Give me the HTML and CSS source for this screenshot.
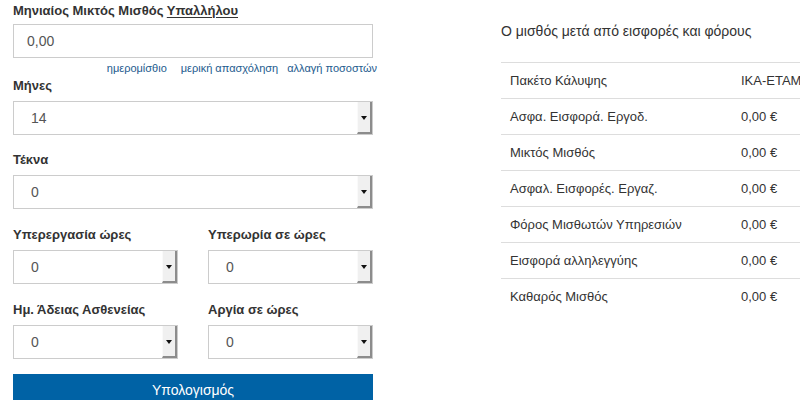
FILE: index.html
```html
<!DOCTYPE html>
<html>
<head>
<meta charset="utf-8">
<link rel="stylesheet" href="styles.css">
</head>
<body>
<div class="page">
  <div class="form">
    <div class="title">Μηνιαίος Μικτός Μισθός <u>Υπαλλήλου</u></div>
    <div class="input">0,00</div>
    <div class="links">
      <a>ημερομίσθιο</a>
      <a>μερική απασχόληση</a>
      <a>αλλαγή ποσοστών</a>
    </div>
    <div class="label">Μήνες</div>
    <div class="select"><span class="val">14</span><span class="btn"><i></i></span></div>
    <div class="label gap">Τέκνα</div>
    <div class="select"><span class="val">0</span><span class="btn"><i></i></span></div>
    <div class="pair">
      <div class="col">
        <div class="label">Υπερεργασία ώρες</div>
        <div class="select"><span class="val">0</span><span class="btn"><i></i></span></div>
      </div>
      <div class="col">
        <div class="label">Υπερωρία σε ώρες</div>
        <div class="select"><span class="val">0</span><span class="btn"><i></i></span></div>
      </div>
    </div>
    <div class="pair">
      <div class="col">
        <div class="label">Ημ. Άδειας Ασθενείας</div>
        <div class="select"><span class="val">0</span><span class="btn"><i></i></span></div>
      </div>
      <div class="col">
        <div class="label">Αργία σε ώρες</div>
        <div class="select"><span class="val">0</span><span class="btn"><i></i></span></div>
      </div>
    </div>
    <div class="submit">Υπολογισμός</div>
  </div>
  <div class="result">
    <div class="rtitle">Ο μισθός μετά από εισφορές και φόρους</div>
    <table class="tbl">
      <tr><td>Πακέτο Κάλυψης</td><td>ΙΚΑ-ΕΤΑΜ</td></tr>
      <tr><td>Ασφα. Εισφορά. Εργοδ.</td><td>0,00 €</td></tr>
      <tr><td>Μικτός Μισθός</td><td>0,00 €</td></tr>
      <tr><td>Ασφαλ. Εισφορές. Εργαζ.</td><td>0,00 €</td></tr>
      <tr><td>Φόρος Μισθωτών Υπηρεσιών</td><td>0,00 €</td></tr>
      <tr><td>Εισφορά αλληλεγγύης</td><td>0,00 €</td></tr>
      <tr><td>Καθαρός Μισθός</td><td>0,00 €</td></tr>
    </table>
  </div>
</div>
</body>
</html>
```
FILE: styles.css
```css
html, body {
  margin: 0;
  padding: 0;
  background: #fff;
  overflow: hidden;
  width: 800px;
  height: 400px;
}
body {
  font-family: "Liberation Sans", Arial, sans-serif;
  color: #333;
}
.page {
  display: flex;
  align-items: flex-start;
  overflow: hidden;
  width: 800px;
}
.form {
  width: 360px;
  flex-shrink: 0;
  margin-left: 13px;
  padding-top: 3px;
}
.title {
  font-size: 13px;
  font-weight: bold;
  line-height: 16px;
  height: 16px;
}
.title u {
  text-decoration-thickness: 1px;
  text-underline-offset: 2px;
}
.input {
  margin-top: 5px;
  height: 32px;
  border: 1px solid #ccc;
  font-size: 14px;
  line-height: 32px;
  padding-left: 13px;
  color: #555;
}
.links {
  display: flex;
  justify-content: flex-end;
  gap: 9px;
  margin-right: -4px;
  font-size: 11px;
  line-height: 14px;
  margin-top: 3px;
}
.links a {
  color: #235b8e;
}
.links a:first-child {
  margin-right: 5px;
}
.label {
  font-size: 13px;
  font-weight: bold;
  line-height: 16px;
  margin-top: 3px;
  margin-bottom: 7px;
}
.label.gap {
  margin-top: 17px;
}
.select {
  display: flex;
  height: 32px;
  border: 1px solid #ccc;
  background: #fff;
}
.select .val {
  flex: 1;
  font-size: 14px;
  line-height: 32px;
  padding-left: 17px;
  color: #555;
}
.select .btn {
  width: 12px;
  background: #f0f0f0;
  border-left: 1px solid #fafafa;
  border-right: 2px solid #8c8c8c;
  border-bottom: 2px solid #8c8c8c;
  display: flex;
  align-items: center;
  justify-content: center;
}
.select .btn i {
  width: 0;
  height: 0;
  border-left: 3px solid transparent;
  border-right: 3px solid transparent;
  border-top: 4px solid #111;
  margin-top: 2px;
}
.pair {
  display: flex;
  gap: 30px;
  margin-top: 15px;
}
.pair .col {
  flex: 1;
}
.submit {
  margin-top: 15px;
  height: 34px;
  background: #0062a5;
  color: #fff;
  font-size: 14px;
  line-height: 33px;
  text-align: center;
}
.result {
  margin-left: 128px;
  width: 360px;
  flex-shrink: 0;
}
.rtitle {
  font-size: 14px;
  line-height: 18px;
  margin-top: 22px;
  height: 40px;
}
.tbl {
  border-collapse: collapse;
  width: 360px;
  font-size: 13px;
  color: #333;
}
.tbl td {
  border-top: 1px solid #ddd;
  height: 35px;
  padding: 0 0 0 9px;
  line-height: 16px;
  white-space: nowrap;
}
.tbl td:first-child {
  width: 222px;
}
```
